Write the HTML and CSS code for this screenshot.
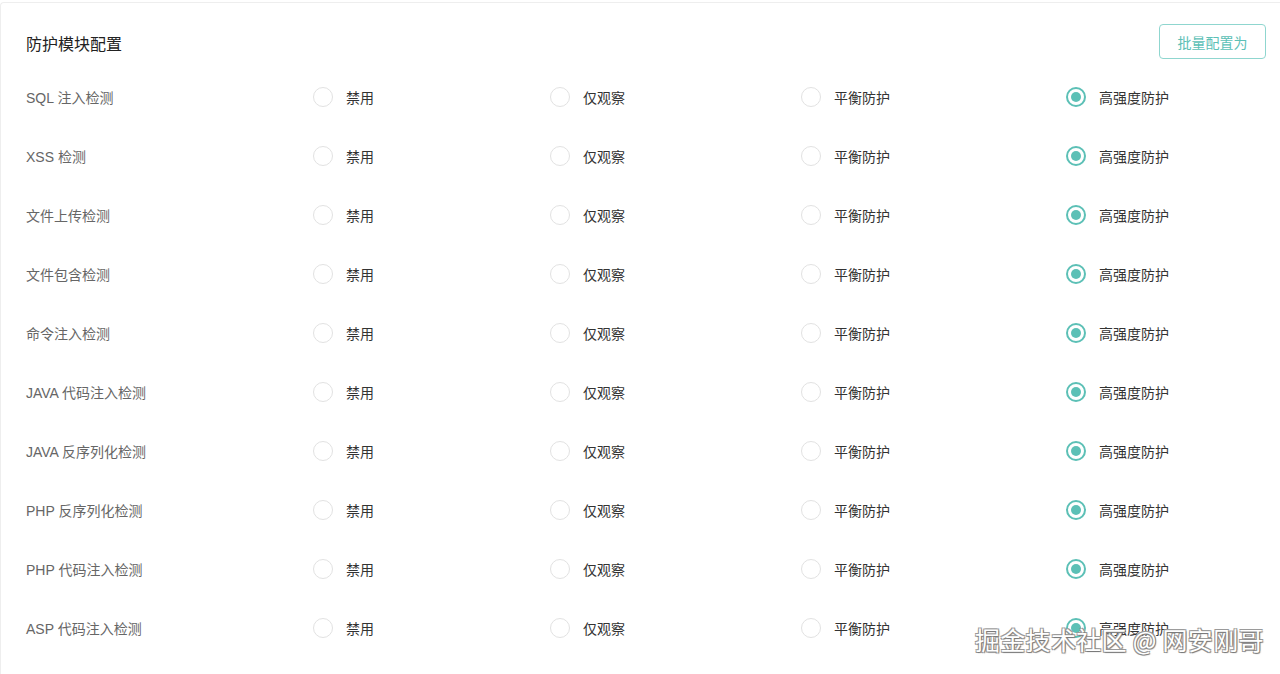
FILE: index.html
```html
<!DOCTYPE html>
<html lang="zh-CN">
<head>
    <meta charset="UTF-8">
    <meta name="viewport" content="width=device-width, initial-scale=1.0">
    <title>防护模块配置</title>
    <link rel="stylesheet" href="styles.css">
</head>
<body>

<div class="card">
    <div class="card-header">
        <h3 class="card-title">防护模块配置</h3>
        <button class="btn btn-outline">批量配置为</button>
    </div>

    <div class="module-list">
        <div class="module-row">
            <div class="module-name">SQL 注入检测</div>
            <div class="radio-group">
                <label class="radio"><span class="radio-dot"></span>禁用</label>
                <label class="radio"><span class="radio-dot"></span>仅观察</label>
                <label class="radio"><span class="radio-dot"></span>平衡防护</label>
                <label class="radio checked"><span class="radio-dot"></span>高强度防护</label>
            </div>
        </div>
        <div class="module-row">
            <div class="module-name">XSS 检测</div>
            <div class="radio-group">
                <label class="radio"><span class="radio-dot"></span>禁用</label>
                <label class="radio"><span class="radio-dot"></span>仅观察</label>
                <label class="radio"><span class="radio-dot"></span>平衡防护</label>
                <label class="radio checked"><span class="radio-dot"></span>高强度防护</label>
            </div>
        </div>
        <div class="module-row">
            <div class="module-name">文件上传检测</div>
            <div class="radio-group">
                <label class="radio"><span class="radio-dot"></span>禁用</label>
                <label class="radio"><span class="radio-dot"></span>仅观察</label>
                <label class="radio"><span class="radio-dot"></span>平衡防护</label>
                <label class="radio checked"><span class="radio-dot"></span>高强度防护</label>
            </div>
        </div>
        <div class="module-row">
            <div class="module-name">文件包含检测</div>
            <div class="radio-group">
                <label class="radio"><span class="radio-dot"></span>禁用</label>
                <label class="radio"><span class="radio-dot"></span>仅观察</label>
                <label class="radio"><span class="radio-dot"></span>平衡防护</label>
                <label class="radio checked"><span class="radio-dot"></span>高强度防护</label>
            </div>
        </div>
        <div class="module-row">
            <div class="module-name">命令注入检测</div>
            <div class="radio-group">
                <label class="radio"><span class="radio-dot"></span>禁用</label>
                <label class="radio"><span class="radio-dot"></span>仅观察</label>
                <label class="radio"><span class="radio-dot"></span>平衡防护</label>
                <label class="radio checked"><span class="radio-dot"></span>高强度防护</label>
            </div>
        </div>
        <div class="module-row">
            <div class="module-name">JAVA 代码注入检测</div>
            <div class="radio-group">
                <label class="radio"><span class="radio-dot"></span>禁用</label>
                <label class="radio"><span class="radio-dot"></span>仅观察</label>
                <label class="radio"><span class="radio-dot"></span>平衡防护</label>
                <label class="radio checked"><span class="radio-dot"></span>高强度防护</label>
            </div>
        </div>
        <div class="module-row">
            <div class="module-name">JAVA 反序列化检测</div>
            <div class="radio-group">
                <label class="radio"><span class="radio-dot"></span>禁用</label>
                <label class="radio"><span class="radio-dot"></span>仅观察</label>
                <label class="radio"><span class="radio-dot"></span>平衡防护</label>
                <label class="radio checked"><span class="radio-dot"></span>高强度防护</label>
            </div>
        </div>
        <div class="module-row">
            <div class="module-name">PHP 反序列化检测</div>
            <div class="radio-group">
                <label class="radio"><span class="radio-dot"></span>禁用</label>
                <label class="radio"><span class="radio-dot"></span>仅观察</label>
                <label class="radio"><span class="radio-dot"></span>平衡防护</label>
                <label class="radio checked"><span class="radio-dot"></span>高强度防护</label>
            </div>
        </div>
        <div class="module-row">
            <div class="module-name">PHP 代码注入检测</div>
            <div class="radio-group">
                <label class="radio"><span class="radio-dot"></span>禁用</label>
                <label class="radio"><span class="radio-dot"></span>仅观察</label>
                <label class="radio"><span class="radio-dot"></span>平衡防护</label>
                <label class="radio checked"><span class="radio-dot"></span>高强度防护</label>
            </div>
        </div>
        <div class="module-row">
            <div class="module-name">ASP 代码注入检测</div>
            <div class="radio-group">
                <label class="radio"><span class="radio-dot"></span>禁用</label>
                <label class="radio"><span class="radio-dot"></span>仅观察</label>
                <label class="radio"><span class="radio-dot"></span>平衡防护</label>
                <label class="radio checked"><span class="radio-dot"></span>高强度防护</label>
            </div>
        </div>
    </div>
</div>

<div class="watermark">掘金技术社区 @ 网安刚哥</div>

</body>
</html>
```

FILE: styles.css
```css
:root {
    --teal: #5cc0b6;
    --teal-light: #8fd6cf;
    --text: #333333;
    --text-light: #666666;
    --border: #eeeeee;
    --radio-border: #e2e2e2;
}

* {
    box-sizing: border-box;
    margin: 0;
    padding: 0;
}

body {
    font-family: "Liberation Sans", "Noto Sans CJK SC", sans-serif;
    background-color: #ffffff;
    color: var(--text);
    height: 674px;
    overflow: hidden;
    position: relative;
}

.card {
    margin-top: 2px;
    min-height: 700px;
    border-top: 1px solid var(--border);
    border-left: 1px solid var(--border);
    border-top-left-radius: 4px;
    padding: 21px 14px 0 25px;
}

.card-header {
    display: flex;
    justify-content: space-between;
    align-items: center;
    height: 35px;
    margin-bottom: 8px;
}

.card-title {
    font-size: 16px;
    font-weight: 400;
    color: #222222;
    padding-top: 2px;
}

.btn {
    font-family: inherit;
    font-size: 14px;
    cursor: pointer;
    background: #ffffff;
}

.btn-outline {
    width: 107px;
    height: 35px;
    border: 1px solid var(--teal-light);
    border-radius: 4px;
    color: var(--teal);
}

.module-row {
    display: flex;
    align-items: center;
    height: 59px;
}

.module-name {
    width: 287px;
    font-size: 14px;
    color: var(--text-light);
}

.radio-group {
    width: 856px;
    display: flex;
    justify-content: space-between;
    align-items: center;
}

.radio {
    display: flex;
    align-items: center;
    gap: 13px;
    font-size: 14px;
    color: var(--text);
    cursor: pointer;
}

.radio-dot {
    width: 20px;
    height: 20px;
    border: 1.5px solid var(--radio-border);
    border-radius: 50%;
    display: flex;
    align-items: center;
    justify-content: center;
}

.radio.checked .radio-dot {
    border: 2px solid var(--teal);
}

.radio.checked .radio-dot::after {
    content: "";
    width: 10px;
    height: 10px;
    border-radius: 50%;
    background-color: var(--teal);
}

.watermark {
    position: absolute;
    left: 975px;
    top: 621px;
    font-family: "Noto Sans CJK SC", sans-serif;
    font-size: 25px;
    color: #ffffff;
    white-space: nowrap;
    text-shadow: 1px 1px 1px #777777, -1px -1px 0 #9a9a9a, 1px -1px 0 #9a9a9a, -1px 1px 0 #9a9a9a;
    letter-spacing: 0.3px;
}
```
